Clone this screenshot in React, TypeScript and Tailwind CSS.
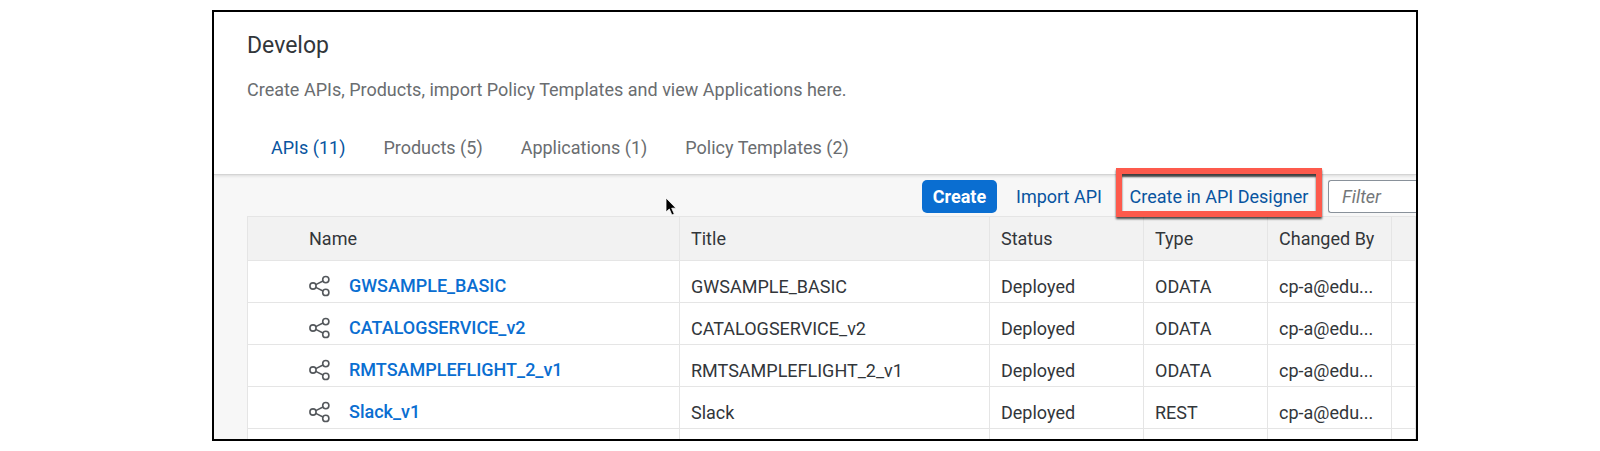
const tabs = ["APIs (11)", "Products (5)", "Applications (1)", "Policy Templates (2)"];

const rows = [
  { name: "GWSAMPLE_BASIC", title: "GWSAMPLE_BASIC", status: "Deployed", type: "ODATA", by: "cp-a@edu..." },
  { name: "CATALOGSERVICE_v2", title: "CATALOGSERVICE_v2", status: "Deployed", type: "ODATA", by: "cp-a@edu..." },
  { name: "RMTSAMPLEFLIGHT_2_v1", title: "RMTSAMPLEFLIGHT_2_v1", status: "Deployed", type: "ODATA", by: "cp-a@edu..." },
  { name: "Slack_v1", title: "Slack", status: "Deployed", type: "REST", by: "cp-a@edu..." },
];

function ShareIcon() {
  return (
    <svg className="h-[22px] w-[22px] shrink-0" viewBox="0 0 22 22" fill="none" stroke="#54585c" strokeWidth="1.6" aria-hidden="true">
      <circle cx="4" cy="11" r="3.1" />
      <circle cx="16.8" cy="4.6" r="3.1" />
      <circle cx="16.8" cy="17.4" r="3.1" />
      <path d="M6.8 9.6 14 6M6.8 12.4 14 16" />
    </svg>
  );
}

function Cursor() {
  return (
    <svg className="absolute left-[451px] top-[22px] h-[20px] w-[14px]" viewBox="0 0 14 20" aria-hidden="true">
      <path d="M1 1v14l3.3-3 2.6 6 2.4-1-2.6-5.8H11z" fill="#000" stroke="#fff" strokeWidth="0.8" />
    </svg>
  );
}

export default function App() {
  return (
    <div className="bg-white pt-[10px] pr-[182px] pb-[10px] pl-[212px] font-['Roboto','Liberation_Sans',sans-serif] text-[18px] leading-6 text-[#32363a]">
      <main className="overflow-hidden border-2 border-black bg-[#f7f7f7]">
        <header className="relative border-b border-[#d4d4d4] bg-white pl-[33px] pt-[18px] shadow-[0_1px_3px_rgba(0,0,0,0.12)]">
          <h1 className="text-[23px] leading-8">Develop</h1>
          <p className="mt-4 text-[#6a6d70]">Create APIs, Products, import Policy Templates and view Applications here.</p>
          <nav className="mt-[34px] flex gap-[38px] pb-[14px] pl-6" aria-label="Sections">
            {tabs.map((tab, i) => (
              <a key={tab} href="#" className={i === 0 ? "text-[#0854a0]" : "text-[#6a6d70]"}>
                {tab}
              </a>
            ))}
          </nav>
        </header>

        <div className="relative flex items-center justify-end pt-[5px] pb-[3px]">
          <Cursor />
          <button className="h-[33px] w-[75px] rounded-[5px] bg-[#0a6ed1] font-bold text-white">Create</button>
          <button className="ml-[6px] h-[33px] w-[112px] whitespace-nowrap text-[#0854a0]">Import API</button>
          <button className="relative ml-px h-[33px] w-[206px] whitespace-nowrap text-[#0854a0]">
            Create in API Designer
            <span className="absolute inset-x-0 -top-3 -bottom-1 border-[6px] border-[#fd5a4c] shadow-[0_2px_2px_rgba(0,0,0,0.7),inset_0_3px_2px_rgba(0,0,0,0.7)]" />
          </button>
          <input
            aria-label="Filter"
            placeholder="Filter"
            className="ml-[6px] h-[33px] w-[88px] rounded-l-[3px] border border-r-0 border-[#89919a] bg-white pl-[13px] italic outline-none placeholder:text-[#74777a]"
          />
        </div>

        <div className="h-[223px] overflow-hidden pl-[33px]">
          <table className="w-full table-fixed border-collapse bg-white text-left">
            <colgroup>
              <col />
              <col className="w-[310px]" />
              <col className="w-[154px]" />
              <col className="w-[124px]" />
              <col className="w-[124px]" />
              <col className="w-[24px]" />
            </colgroup>
            <thead>
              <tr className="h-[44px] bg-[#f2f2f2] [&>th]:border [&>th]:border-[#e5e5e5] [&>th]:font-normal">
                <th className="pl-[61px]">Name</th>
                <th className="pl-[11px]">Title</th>
                <th className="pl-[11px]">Status</th>
                <th className="pl-[11px]">Type</th>
                <th className="pl-[11px]">Changed By</th>
                <th aria-label="More" />
              </tr>
            </thead>
            <tbody>
              {rows.map((row) => (
                <tr key={row.name} className="h-[42px] [&>td]:border [&>td]:border-[#e5e5e5] [&>td]:pt-[11px]">
                  <td className="pl-[61px]">
                    <div className="flex items-center gap-[18px] pb-[3px]">
                      <ShareIcon />
                      <a href="#" className="font-medium text-[#0a6ed1]">{row.name}</a>
                    </div>
                  </td>
                  <td className="pl-[11px]">{row.title}</td>
                  <td className="pl-[11px]">{row.status}</td>
                  <td className="pl-[11px]">{row.type}</td>
                  <td className="pl-[11px]">{row.by}</td>
                  <td />
                </tr>
              ))}
              <tr className="h-[42px] [&>td]:border [&>td]:border-[#e5e5e5]">
                <td /><td /><td /><td /><td /><td />
              </tr>
            </tbody>
          </table>
        </div>
      </main>
    </div>
  );
}
